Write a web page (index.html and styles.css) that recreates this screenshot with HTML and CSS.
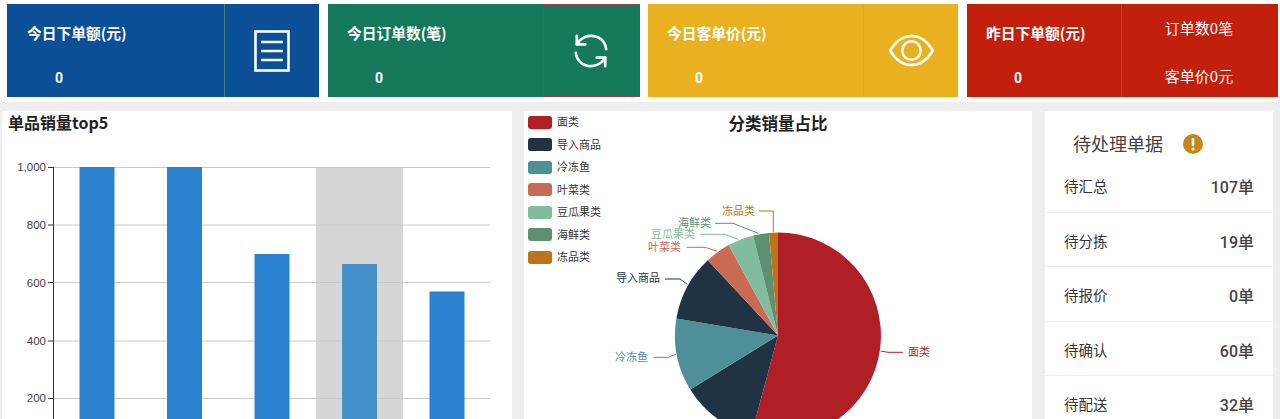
FILE: index.html
```html
<!DOCTYPE html>
<html lang="zh">
<head>
<meta charset="utf-8">
<title>数据看板</title>
<link rel="stylesheet" href="styles.css">
</head>
<body>
<header class="stats">
  <section class="card card-blue">
    <div class="card-main"><div class="card-title">今日下单额(元)</div><div class="card-value">0</div></div>
    <div class="card-side">
      <svg class="icon" width="36" height="42" viewBox="0 0 36 42"><rect x="1.5" y="1.5" width="33" height="39" fill="none" stroke="#fff" stroke-width="2.6"/><path d="M7 12h22M7 21h22M7 30h22" stroke="#fff" stroke-width="2.6"/></svg>
    </div>
  </section>
  <section class="card card-green">
    <div class="card-main"><div class="card-title">今日订单数(笔)</div><div class="card-value">0</div></div>
    <div class="card-side">
      <svg class="icon" width="36" height="36" viewBox="0 0 38 38" fill="none" stroke="#fff" stroke-width="2.8" stroke-linecap="round" stroke-linejoin="round"><path d="M35 17C34 8 27 3 19 3c-5 0-9 2-12 5L4 12"/><path d="M4 3v9h9"/><path d="M3 21c1 9 8 14 16 14 5 0 9-2 12-5l3-4"/><path d="M34 35v-9h-9"/></svg>
    </div>
  </section>
  <section class="card card-yellow">
    <div class="card-main"><div class="card-title">今日客单价(元)</div><div class="card-value">0</div></div>
    <div class="card-side">
      <svg class="icon" width="47" height="33" viewBox="0 0 48 34" fill="none" stroke="#fff" stroke-width="2.600"><path d="M2 17C8 7 15 2 24 2s16 5 22 15c-6 10-13 15-22 15S8 27 2 17z"/><circle cx="24" cy="17" r="9.5"/></svg>
    </div>
  </section>
  <section class="card card-red">
    <div class="card-main"><div class="card-title">昨日下单额(元)</div><div class="card-value">0</div></div>
    <div class="card-side card-side-text"><span>订单数0笔</span><span>客单价0元</span></div>
  </section>
</header>

<main class="panels">
  <section class="panel panel-bar">
    <svg class="chart" width="510" height="308" viewBox="2 111 510 308">
      <text class="chart-title" x="8" y="129">单品销量top5</text>
      <rect x="316" y="167" width="87" height="252" fill="#d6d6d6"/>
      <g stroke="#c9c9c9" stroke-width="1">
        <path d="M53 167.5H490M53 225H490M53 282.5H490M53 341H490M53 398.500H490"/>
      </g>
      <g stroke="#333" stroke-width="1">
        <path d="M53.500 167V419M48 167.500h5M48 225h5M48 282.500h5M48 341h5M48 398.500h5"/>
      </g>
      <g class="tick" text-anchor="end">
        <text x="46" y="171">1,000</text>
        <text x="46" y="229">800</text>
        <text x="46" y="287">600</text>
        <text x="46" y="345">400</text>
        <text x="46" y="402">200</text>
      </g>
      <g fill="#2b82d0">
        <rect x="79.500" y="167" width="35" height="252"/>
        <rect x="167" y="167" width="35" height="252"/>
        <rect x="254.500" y="254" width="35" height="165"/>
        <rect x="342" y="264" width="35" height="155" fill="#4690cc"/>
        <rect x="429.500" y="291.500" width="35" height="128"/>
      </g>
    </svg>
  </section>

  <section class="panel panel-pie">
    <svg class="chart" width="508" height="308" viewBox="524 111 508 308">
      <text class="chart-title chart-title-pie" x="778" y="130" text-anchor="middle">分类销量占比</text>
      <g class="legend">
        <rect x="528" y="116" width="24" height="13" rx="3" fill="#b01f26"/><text x="557" y="126">面类</text>
        <rect x="528" y="138" width="24" height="13" rx="3" fill="#1f3344"/><text x="557" y="149">导入商品</text>
        <rect x="528" y="161" width="24" height="13" rx="3" fill="#4f8f98"/><text x="557" y="171">冷冻鱼</text>
        <rect x="528" y="183" width="24" height="13" rx="3" fill="#c96a55"/><text x="557" y="194">叶菜类</text>
        <rect x="528" y="206" width="24" height="13" rx="3" fill="#7fbd9c"/><text x="557" y="216">豆瓜果类</text>
        <rect x="528" y="228" width="24" height="13" rx="3" fill="#5d9070"/><text x="557" y="239">海鲜类</text>
        <rect x="528" y="251" width="24" height="13" rx="3" fill="#bd7317"/><text x="557" y="261">冻品类</text>
      </g>
      <path fill="#b01f26" d="M778 335.500V232.500A103 103 0 1 1 751.300 435Z"/>
      <path fill="#1f3344" d="M778 335.500L751.300 435A103 103 0 0 1 690.300 389.500Z"/>
      <path fill="#4f8f98" d="M778 335.500L690.300 389.500A103 103 0 0 1 676.400 318.500Z"/>
      <path fill="#1f3344" d="M778 335.500L676.400 318.500A103 103 0 0 1 707.800 260.200Z"/>
      <path fill="#c96a55" d="M778 335.500L707.800 260.200A103 103 0 0 1 728.700 245.100Z"/>
      <path fill="#7fbd9c" d="M778 335.500L728.700 245.100A103 103 0 0 1 753.100 235.600Z"/>
      <path fill="#5d9070" d="M778 335.500L753.100 235.600A103 103 0 0 1 769 232.900Z"/>
      <path fill="#bd7317" d="M778 335.500L769 232.900A103 103 0 0 1 778 232.500Z"/>
      <g fill="none" stroke-width="1">
        <path stroke="#b01f26" d="M880.700 351L888 352.300H903"/>
        <path stroke="#4f8f98" d="M676 354.300L668.300 357.300H653.300"/>
        <path stroke="#1f3344" d="M687.300 284.300L680 279H665"/>
        <path stroke="#c96a55" d="M717.300 251.300L705 247.300H686.700"/>
        <path stroke="#7fbd9c" d="M738.300 239.300L725 234.300H700"/>
        <path stroke="#5d9070" d="M758.300 233.300L733 223.300H715"/>
        <path stroke="#bd7317" d="M773.300 232.300V211H759"/>
      </g>
      <g class="pie-label">
        <text x="908" y="356" fill="#b01f26">面类</text>
        <text x="648" y="361" fill="#4f8f98" text-anchor="end">冷冻鱼</text>
        <text x="660" y="282" fill="#1f3344" text-anchor="end">导入商品</text>
        <text x="681" y="251" fill="#c96a55" text-anchor="end">叶菜类</text>
        <text x="695" y="238" fill="#7fbd9c" text-anchor="end">豆瓜果类</text>
        <text x="711" y="227" fill="#5d9070" text-anchor="end">海鲜类</text>
        <text x="755" y="215" fill="#bd7317" text-anchor="end">冻品类</text>
      </g>
    </svg>
  </section>

  <section class="panel panel-todo">
    <h2 class="todo-title">待处理单据
      <svg class="todo-alert" width="20" height="20" viewBox="0 0 20 20"><circle cx="10" cy="10" r="10" fill="#c8861a"/><rect x="8.700" y="4" width="2.600" height="8" rx="1.200" fill="#fff"/><circle cx="10" cy="15" r="1.600" fill="#fff"/></svg>
    </h2>
    <ul class="todo-list">
      <li class="todo-row"><span>待汇总</span><b>107单</b></li>
      <li class="todo-row"><span>待分拣</span><b>19单</b></li>
      <li class="todo-row"><span>待报价</span><b>0单</b></li>
      <li class="todo-row"><span>待确认</span><b>60单</b></li>
      <li class="todo-row"><span>待配送</span><b>32单</b></li>
    </ul>
  </section>
</main>
</body>
</html>
```

FILE: styles.css
```css
* { box-sizing: border-box; }
html, body { margin: 0; height: 419px; overflow: hidden; }
body {
  background: #eeeeee;
  font-family: "Noto Sans CJK SC", "Noto Sans", sans-serif;
}
.stats {
  height: 102px;
  background: #fff;
  padding: 4px 2px 5px 7px;
  display: flex;
  gap: 9px;
}
.card { display: flex; width: 312px; height: 93px; color: #fff; }
.card-green { margin-right: -1px; }
.card-yellow { width: 310px; }
.card-red { width: 311px; }
.card-main { flex: 1; min-width: 0; padding: 18px 0 0 19px; }
.card-blue .card-main { padding-left: 20px; }
.card-title { font-size: 14.750px; font-weight: 700; line-height: 22px; }
.card-value {
  margin: 23px 0 0 28px;
  font-family: Roboto, sans-serif;
  font-size: 14px;
  font-weight: 700;
  line-height: 22px;
}
.card-side {
  flex: none;
  width: 95px;
  display: flex;
  align-items: center;
  justify-content: center;
  border-left: 1px solid transparent;
}
.card-blue { background: #0b4f96; }
.card-blue .card-side { border-left-color: #3f8a6e; }
.card-green { background: #15795c; }
.card-green .card-side { margin-right: 2px; border: 1px solid #a33a45; }
.card-yellow { background: #e9b11f; }
.card-yellow .card-side { border-left-color: #e3a726; }
.card-red { background: #c2200c; }
.card-side-text {
  width: 157px;
  flex-direction: column;
  justify-content: space-between;
  padding: 14px 2px 11px 0;
  font-size: 15px;
  line-height: 20px;
  border-left-color: #cc3a20;
}
.panels { display: flex; padding: 9px 7px 0 2px; gap: 12px; }
.panel { background: #fff; height: 308px; overflow: hidden; }
.panel-bar { width: 510px; }
.panel-pie { width: 508px; }
.panel-todo { width: 228px; margin-left: 1px; }
.chart { display: block; }
.chart-title { font-size: 16px; font-weight: 700; fill: #222; }
.chart-title-pie { font-size: 16.500px; }
.tick text { font-family: "Liberation Sans", sans-serif; font-size: 11.500px; fill: #444; }
.legend text, .pie-label text { font-size: 11px; }
.legend text { fill: #333; }
.todo-title {
  margin: 0;
  padding: 18px 0 0 28px;
  height: 47px;
  display: flex;
  align-items: flex-start;
  gap: 20px;
  font-size: 18px;
  font-weight: 400;
  line-height: 29px;
  color: #444;
}
.todo-alert { margin-top: 5px; }
.todo-list { list-style: none; margin: 0; padding: 0; }
.todo-row {
  height: 54.500px;
  display: flex;
  justify-content: space-between;
  align-items: flex-start;
  padding: 18px 19px 0 19px;
  border-bottom: 1px solid #eeeeee;
  font-family: Roboto, "Noto Sans CJK SC", sans-serif;
  font-size: 14.500px;
  line-height: 24px;
  color: #333;
}
.todo-row b { font-size: 16px; font-weight: 500; color: #444; }
```
